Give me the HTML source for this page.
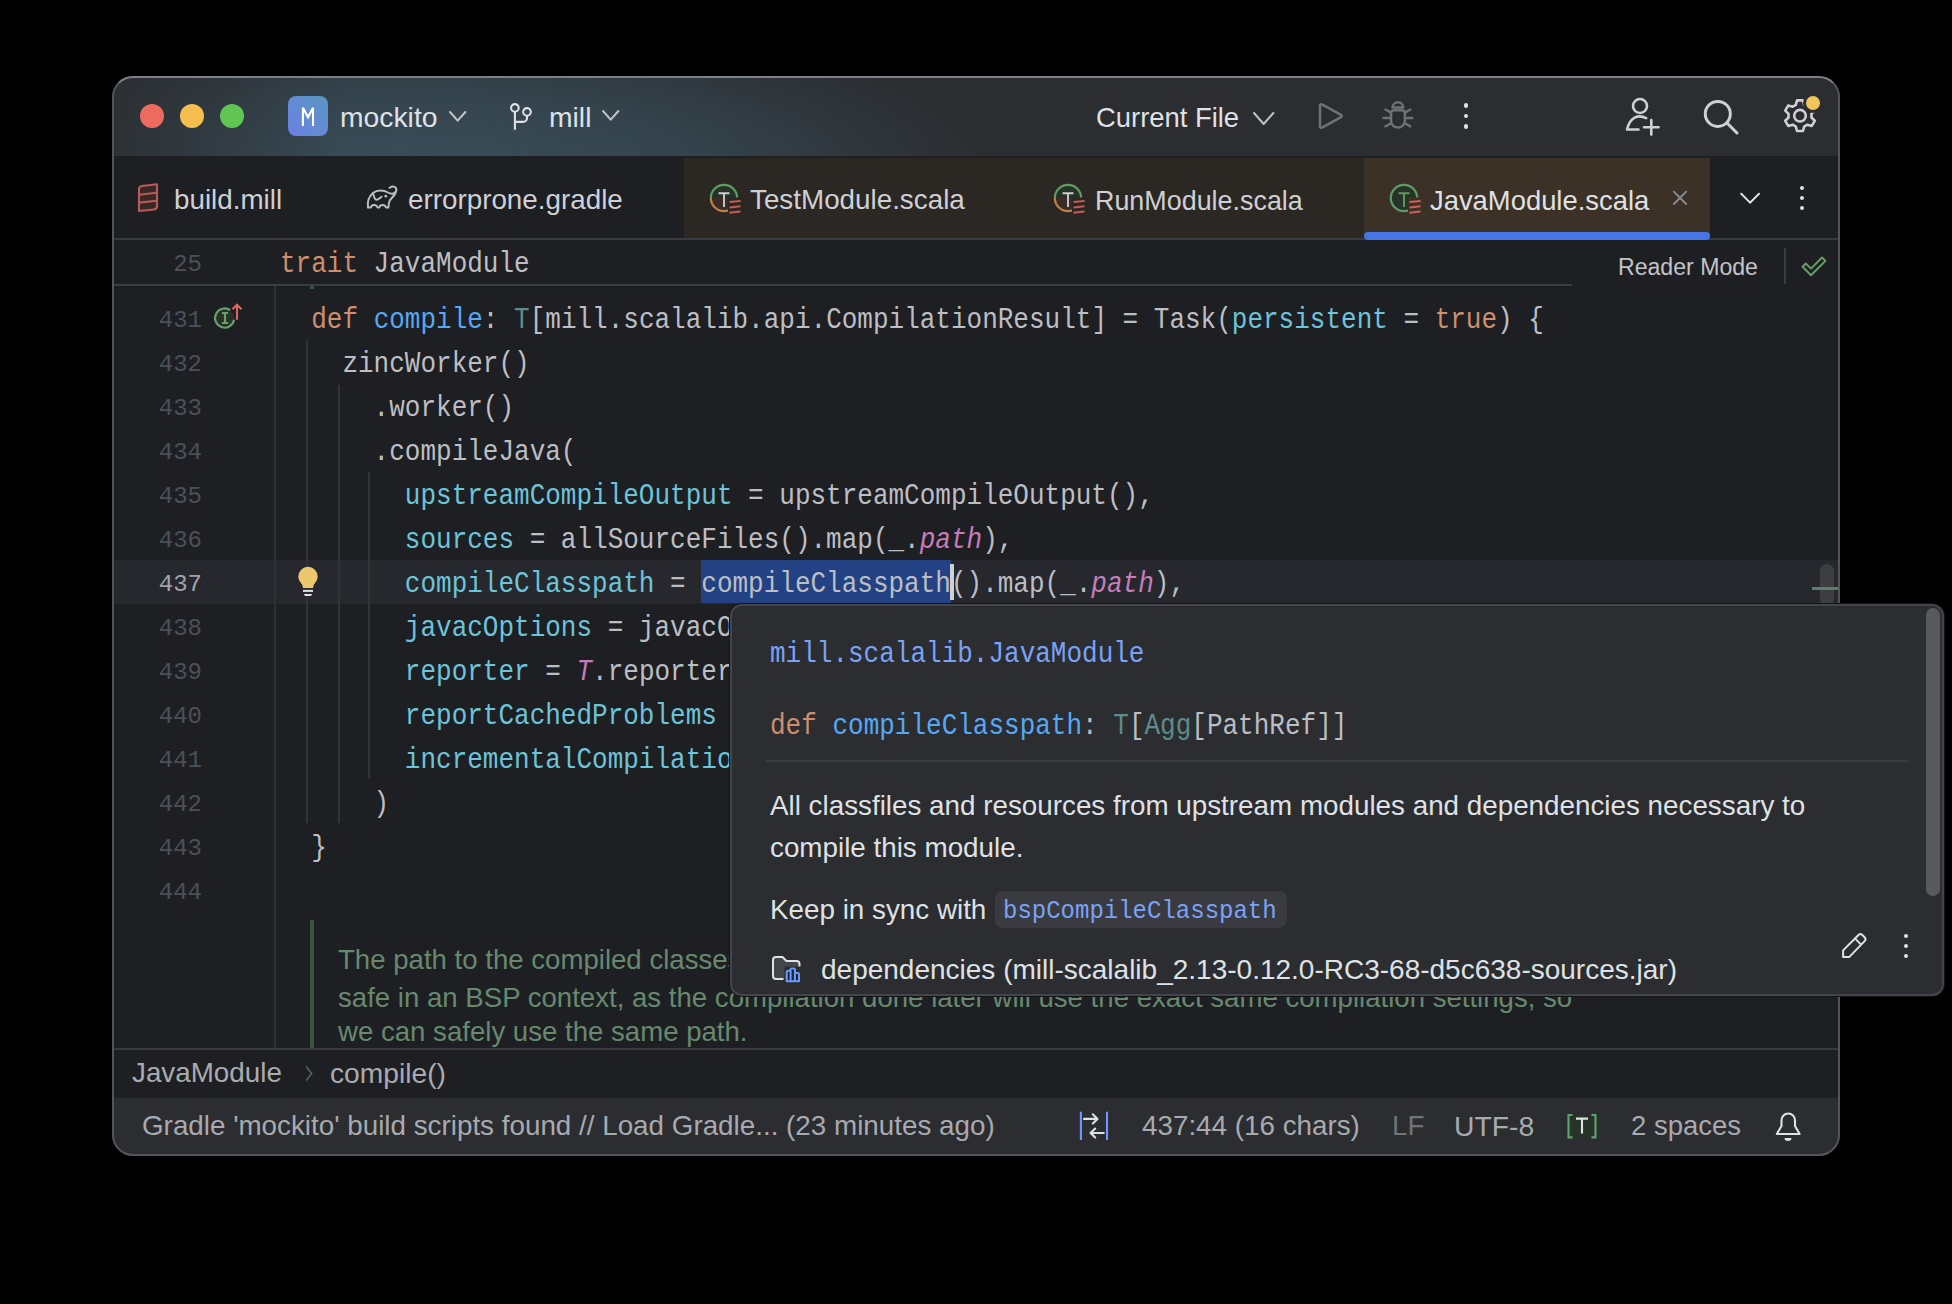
<!DOCTYPE html>
<html><head><meta charset="utf-8">
<style>
*{margin:0;padding:0;box-sizing:border-box}
html,body{width:1952px;height:1304px;background:#000;overflow:hidden}
body{position:relative;font-family:"Liberation Sans",sans-serif;color:#DFE1E5;-webkit-font-smoothing:antialiased}
.a{position:absolute}
#clip{position:absolute;left:0;top:0;width:1952px;height:1304px;clip-path:inset(76px 112px 148px 112px round 21px)}
#winb{position:absolute;left:112px;top:76px;width:1728px;height:1080px;border-radius:21px;border:2px solid #535457;border-top-color:#7E7F82;pointer-events:none}
.ui{position:absolute;font-family:"Liberation Sans",sans-serif;font-size:27.6px;white-space:pre;line-height:40px;height:40px}
.code{position:absolute;left:280px;font-family:"Liberation Mono",monospace;font-size:26px;line-height:44px;height:44px;white-space:pre;color:#BCBEC4;transform:scaleY(1.1);transform-origin:0 29px}
.ln{position:absolute;width:120px;left:82px;text-align:right;font-family:"Liberation Mono",monospace;font-size:24px;line-height:44px;height:44px;color:#4B5059}
.kw{color:#CF8E6D}.fn{color:#56A8F5}.pr{color:#6CC4DA}.it{color:#C77DBB;font-style:italic}.ty{color:#5F8C8A}
.sel{}
.pm{font-family:"Liberation Mono",monospace;font-size:26px}
svg{position:absolute;overflow:visible}
</style></head><body>
<div id="clip">

<div class="a" style="left:112px;top:76px;width:1728px;height:80px;background:linear-gradient(90deg,rgba(43,45,48,.8) 0px,rgba(43,45,48,0) 230px),radial-gradient(ellipse 600px 170px at 290px 100px,#3A4E5A 0%,#35454F 45%,#2B2D30 100%)"></div>
<div class="a" style="left:112px;top:156px;width:1728px;height:2px;background:#1E1F22"></div>
<div class="a" style="left:112px;top:158px;width:1728px;height:80px;background:#1E1F22"></div>
<div class="a" style="left:684px;top:158px;width:680px;height:80px;background:#2B2722"></div>
<div class="a" style="left:1364px;top:158px;width:346px;height:80px;background:#3C3126"></div>
<div class="a" style="left:112px;top:238px;width:1728px;height:2px;background:#393B40"></div>
<div class="a" style="left:1364px;top:232px;width:346px;height:8px;border-radius:4px;background:#4675E5"></div>
<div class="a" style="left:112px;top:240px;width:1728px;height:808px;background:#1E1F22"></div>
<div class="a" style="left:112px;top:284px;width:1460px;height:2px;background:#3B3D42"></div>
<div class="a" style="left:112px;top:286px;width:1460px;height:2px;background:#1B1C1F"></div>
<div class="a" style="left:310px;top:286px;width:4px;height:2.5px;background:#3D5444"></div>
<div class="a" style="left:112px;top:560px;width:1728px;height:44px;background:#26282E"></div>
<div class="a" style="left:701px;top:560px;width:250px;height:43px;background:#234283"></div>
<div class="a" style="left:274px;top:286px;width:2px;height:762px;background:#2F3034"></div>
<div class="a" style="left:306px;top:340px;width:2px;height:483px;background:#313337"></div>
<div class="a" style="left:338px;top:385px;width:2px;height:438px;background:#313337"></div>
<div class="a" style="left:368px;top:472px;width:2px;height:307px;background:#313337"></div>
<div class="a" style="left:112px;top:1048px;width:1728px;height:2px;background:#393B40"></div>
<div class="a" style="left:112px;top:1050px;width:1728px;height:48px;background:#1E1F22"></div>
<div class="a" style="left:112px;top:1098px;width:1728px;height:58px;background:#2B2D30"></div>
<div class="a" style="left:140px;top:104px;width:24px;height:24px;border-radius:50%;background:#EC6A5E"></div>
<div class="a" style="left:180px;top:104px;width:24px;height:24px;border-radius:50%;background:#F4BF4F"></div>
<div class="a" style="left:220px;top:104px;width:24px;height:24px;border-radius:50%;background:#61C554"></div>
<div class="a" style="left:288px;top:96px;width:40px;height:40px;border-radius:8px;background:linear-gradient(45deg,#6B7FE3,#5A97C2)"></div>
<svg style="left:288px;top:96px" width="40" height="40"><path d="M14.9 30 V11.8 L20 21.2 L25 11.8 V30" fill="none" stroke="#FFFFFF" stroke-width="2.1" stroke-linejoin="miter"/></svg>
<div class="ui" style="left:340px;top:97.19px;color:#DFE1E5;font-size:28.3px;">mockito</div>
<svg style="left:449.3px;top:110.5px" width="17.4" height="10.7"><path d="M1 1 L8.7 9.7 L16.4 1" fill="none" stroke="#C0C2C7" stroke-width="2" stroke-linecap="round" stroke-linejoin="round"/></svg>
<svg style="left:500px;top:94px" width="40" height="44"><circle cx="14.9" cy="13.9" r="3.8" fill="none" stroke="#DFE1E5" stroke-width="2.1"/><circle cx="27" cy="17.9" r="3.8" fill="none" stroke="#DFE1E5" stroke-width="2.1"/><path d="M14.9 17.7 V35.8 M14.9 27.9 H23 A4 4 0 0 0 27 23.9 V21.7" fill="none" stroke="#DFE1E5" stroke-width="2.1"/></svg>
<div class="ui" style="left:549px;top:97.19px;color:#DFE1E5;font-size:28.3px;">mill</div>
<svg style="left:601.6px;top:109.7px" width="17.4" height="10.7"><path d="M1 1 L8.7 9.7 L16.4 1" fill="none" stroke="#C0C2C7" stroke-width="2" stroke-linecap="round" stroke-linejoin="round"/></svg>
<div class="ui" style="left:1096px;top:97.51px;color:#DFE1E5;font-size:27.4px;">Current File</div>
<svg style="left:1253.3px;top:111.7px" width="21.4" height="13"><path d="M1 1 L10.7 12 L20.4 1" fill="none" stroke="#C0C2C7" stroke-width="2" stroke-linecap="round" stroke-linejoin="round"/></svg>
<svg style="left:1316px;top:100px" width="30" height="32"><path d="M4 6 Q4 3.3 6.4 4.6 L24.6 14.6 Q26.8 16 24.6 17.4 L6.4 27.4 Q4 28.7 4 26 Z" fill="none" stroke="#6F7074" stroke-width="2.6" stroke-linejoin="round"/></svg>
<svg style="left:1376px;top:94px" width="44" height="42"><path d="M16.6 13.6 A5.3 5.3 0 0 1 27.2 13.6 Z" fill="none" stroke="#6F7074" stroke-width="2.5" stroke-linejoin="round"/><path d="M15 19.5 Q15 16.3 18.5 16.3 H25.4 Q28.9 16.3 28.9 19.5 V26.6 A6.95 7 0 0 1 15 26.6 Z" fill="none" stroke="#6F7074" stroke-width="2.5"/><path d="M9.5 15.5 L14.5 18.3 M34.3 15.5 L29.3 18.3 M7.5 24 H13.5 M36.3 24 H30.3 M9.5 32.3 L14.5 29.5 M34.3 32.3 L29.3 29.5" stroke="#6F7074" stroke-width="2.5" stroke-linecap="round"/></svg>
<div class="a" style="left:1463.6px;top:103.0px;width:4.8px;height:4.8px;border-radius:50%;background:#DFE1E5"></div>
<div class="a" style="left:1463.6px;top:113.6px;width:4.8px;height:4.8px;border-radius:50%;background:#DFE1E5"></div>
<div class="a" style="left:1463.6px;top:124.19999999999999px;width:4.8px;height:4.8px;border-radius:50%;background:#DFE1E5"></div>
<svg style="left:1610px;top:86px" width="60" height="56"><circle cx="30" cy="20" r="7" fill="none" stroke="#CED0D6" stroke-width="2.6"/><path d="M36.2 32.2 C 28 28 20 31 17 43.5 H 28.5" fill="none" stroke="#CED0D6" stroke-width="2.6" stroke-linecap="round" stroke-linejoin="round"/><path d="M34 41.3 H 48.6 M 41.3 34 V 48.6" stroke="#CED0D6" stroke-width="2.6" stroke-linecap="round"/></svg>
<svg style="left:1700px;top:96px" width="42" height="42"><circle cx="17.8" cy="17.9" r="12.5" fill="none" stroke="#CED0D6" stroke-width="3"/><path d="M27 27 L 37 37" stroke="#CED0D6" stroke-width="3" stroke-linecap="round"/></svg>
<svg style="left:1782px;top:98px" width="36" height="36"><path d="M13.84 6.87 L15.02 2.39 L20.98 2.39 L22.16 6.87 L25.30 8.69 L29.77 7.47 L32.75 12.62 L29.46 15.89 L29.46 19.51 L32.75 22.78 L29.77 27.93 L25.30 26.71 L22.16 28.53 L20.98 33.01 L15.02 33.01 L13.84 28.53 L10.70 26.71 L6.23 27.93 L3.25 22.78 L6.54 19.51 L6.54 15.89 L3.25 12.62 L6.23 7.47 L10.70 8.69Z" fill="none" stroke="#CED0D6" stroke-width="2.6" stroke-linejoin="round"/><circle cx="18" cy="17.7" r="5.8" fill="none" stroke="#CED0D6" stroke-width="2.6"/></svg>
<div class="a" style="left:1806px;top:96px;width:14px;height:14px;border-radius:50%;background:#F2C55C;box-shadow:0 0 0 3px #2B2D30"></div>
<svg style="left:130px;top:178px" width="36" height="40"><path d="M9 33 V11 Q9 8.3 12 8 L27 6.3 V28.5 Q27 31.2 24 31.5 Z" fill="#382828" stroke="#B85A56" stroke-width="2.1" stroke-linejoin="round"/><path d="M9 16.7 L27 14.8 M9 24.6 L27 22.7" stroke="#B85A56" stroke-width="2.1"/></svg>
<div class="ui" style="left:174px;top:180.37px;color:#CED0D6;font-size:27.8px;">build.mill</div>
<svg style="left:360px;top:178px" width="44" height="38"><path d="M8 29.6 C 7 23 9 18.5 13 15 C 17 11.5 24 12 28 14.5 C 31.5 16.5 35.5 16 36.3 12.3 C 36.8 9 33.5 7.2 29.5 9.8 M 36.2 13 C 35.6 17.5 31.5 19.5 29.8 22.5 C 28.6 24.8 28.5 27 28.4 29.6 H 26 C 25.2 26.2 20.2 26 19.2 29.6 H 17.6 C 16.8 26.2 11.6 26 10.8 29.6 H 8" fill="none" stroke="#B9BBC0" stroke-width="2" stroke-linejoin="round" stroke-linecap="round"/><path d="M13 15 C 14 19 14.4 21.6 16.2 21.8 C 18 22 19.8 20.2 21.6 18.8" fill="none" stroke="#B9BBC0" stroke-width="2" stroke-linecap="round"/><circle cx="25.8" cy="18.2" r="1.4" fill="#B9BBC0"/></svg>
<div class="ui" style="left:408px;top:180.37px;color:#CED0D6;font-size:27.8px;">errorprone.gradle</div>
<svg style="left:708px;top:182px" width="36" height="36"><path d="M2.8 16 A13.2 13.2 0 0 1 29.2 16 Z" fill="#283328"/><path d="M2.8 16 A13.2 13.2 0 0 0 29.2 16 Z" fill="#3A2C24"/><path d="M2.8 16 A13.2 13.2 0 0 1 29.2 16" fill="none" stroke="#5E9C66" stroke-width="2.2"/><path d="M2.8 16 A13.2 13.2 0 0 0 29.2 16" fill="none" stroke="#BD7E4A" stroke-width="2.2"/><path d="M10.5 11.2 H21.5 M16 11.2 V25" stroke="#C9CBD0" stroke-width="1.9"/><rect x="20" y="15.5" width="14" height="18" fill="#2B2722"/><path d="M21.5 20.1 L32.5 19 M21.5 25.4 L32.5 24.3 M21.5 30.7 L32.5 29.6" stroke="#C85A55" stroke-width="2"/></svg>
<div class="ui" style="left:750px;top:180.37px;color:#CED0D6;font-size:27.8px;">TestModule.scala</div>
<svg style="left:1052px;top:182px" width="36" height="36"><path d="M2.8 16 A13.2 13.2 0 0 1 29.2 16 Z" fill="#283328"/><path d="M2.8 16 A13.2 13.2 0 0 0 29.2 16 Z" fill="#3A2C24"/><path d="M2.8 16 A13.2 13.2 0 0 1 29.2 16" fill="none" stroke="#5E9C66" stroke-width="2.2"/><path d="M2.8 16 A13.2 13.2 0 0 0 29.2 16" fill="none" stroke="#BD7E4A" stroke-width="2.2"/><path d="M10.5 11.2 H21.5 M16 11.2 V25" stroke="#C9CBD0" stroke-width="1.9"/><rect x="20" y="15.5" width="14" height="18" fill="#2B2722"/><path d="M21.5 20.1 L32.5 19 M21.5 25.4 L32.5 24.3 M21.5 30.7 L32.5 29.6" stroke="#C85A55" stroke-width="2"/></svg>
<div class="ui" style="left:1095px;top:180.68px;color:#CED0D6;font-size:26.9px;">RunModule.scala</div>
<svg style="left:1388px;top:182px" width="36" height="36"><circle cx="16" cy="16" r="13.2" fill="#283328" stroke="#5E9C66" stroke-width="2.2"/><path d="M10.5 11.2 H21.5 M16 11.2 V25" stroke="#5E9C66" stroke-width="1.9"/><rect x="20" y="15.5" width="14" height="18" fill="#3C3126"/><path d="M21.5 20.1 L32.5 19 M21.5 25.4 L32.5 24.3 M21.5 30.7 L32.5 29.6" stroke="#D0605A" stroke-width="2"/></svg>
<div class="ui" style="left:1430px;top:180.51px;color:#DFE1E5;font-size:27.4px;">JavaModule.scala</div>
<svg style="left:1660px;top:170px" width="40" height="40"><path d="M13.8 21.6 L26.2 34 M26.2 21.6 L13.8 34" stroke="#8C8E94" stroke-width="1.8" stroke-linecap="round"/></svg>
<svg style="left:1730px;top:180px" width="40" height="40"><path d="M11.2 13.8 L20.1 22.7 L29 13.8" fill="none" stroke="#DFE1E5" stroke-width="2" stroke-linecap="round"/></svg>
<div class="a" style="left:1799.8px;top:185.8px;width:4.4px;height:4.4px;border-radius:50%;background:#DFE1E5"></div>
<div class="a" style="left:1799.8px;top:195.8px;width:4.4px;height:4.4px;border-radius:50%;background:#DFE1E5"></div>
<div class="a" style="left:1799.8px;top:205.8px;width:4.4px;height:4.4px;border-radius:50%;background:#DFE1E5"></div>
<div class="code" style="top:243px"><span class="kw">trait</span> JavaModule</div>
<div class="ln" style="top:243px">25</div>
<div class="ui" style="left:1618px;top:247.40px;color:#C2C4C9;font-size:23.1px;">Reader Mode</div>
<div class="a" style="left:1784px;top:248px;width:2px;height:36px;background:#393B40"></div>
<svg style="left:1796px;top:250px" width="38" height="34"><path d="M6.6 16.8 L9.8 13.5 L15 18.6 L26 7.5 L29.4 10.9 L15 25.2 Z" fill="none" stroke="#639F68" stroke-width="2" stroke-linejoin="round"/></svg>
<div class="ln" style="top:299px;">431</div>
<div class="code" style="top:299px">  <span class="kw">def</span> <span class="fn">compile</span>: <span class="ty">T</span>[mill.scalalib.api.CompilationResult] = Task(<span class="pr">persistent</span> = <span class="kw">true</span>) {</div>
<div class="ln" style="top:343px;">432</div>
<div class="code" style="top:343px">    zincWorker()</div>
<div class="ln" style="top:387px;">433</div>
<div class="code" style="top:387px">      .worker()</div>
<div class="ln" style="top:431px;">434</div>
<div class="code" style="top:431px">      .compileJava(</div>
<div class="ln" style="top:475px;">435</div>
<div class="code" style="top:475px">        <span class="pr">upstreamCompileOutput</span> = upstreamCompileOutput(),</div>
<div class="ln" style="top:519px;">436</div>
<div class="code" style="top:519px">        <span class="pr">sources</span> = allSourceFiles().map(_.<span class="it">path</span>),</div>
<div class="ln" style="top:563px;color:#A1A3AB">437</div>
<div class="code" style="top:563px">        <span class="pr">compileClasspath</span> = <span class="sel">compileClasspath</span>().map(_.<span class="it">path</span>),</div>
<div class="ln" style="top:607px;">438</div>
<div class="code" style="top:607px">        <span class="pr">javacOptions</span> = javacOptions(),</div>
<div class="ln" style="top:651px;">439</div>
<div class="code" style="top:651px">        <span class="pr">reporter</span> = <span class="it">T</span>.reporter.apply(hashCode),</div>
<div class="ln" style="top:695px;">440</div>
<div class="code" style="top:695px">        <span class="pr">reportCachedProblems</span> = zincReportCachedProblems(),</div>
<div class="ln" style="top:739px;">441</div>
<div class="code" style="top:739px">        <span class="pr">incrementalCompilation</span> = zincIncrementalCompilation()</div>
<div class="ln" style="top:783px;">442</div>
<div class="code" style="top:783px">      )</div>
<div class="ln" style="top:827px;">443</div>
<div class="code" style="top:827px">  }</div>
<div class="ln" style="top:871px;">444</div>
<div class="code" style="top:871px"></div>
<svg style="left:208px;top:298px" width="44" height="38"><circle cx="16.6" cy="20" r="9.6" fill="#283328"/><path d="M22.2 12.2 A9.6 9.6 0 1 0 26.1 21.8" fill="none" stroke="#6AA06E" stroke-width="2.1"/><path d="M14 15 H20.1 M17 15 V25 M14 25 H20.1" stroke="#6AA06E" stroke-width="2.1"/><path d="M29 21.8 V7 M24.5 11.2 L29 6.7 L33.5 11.2" fill="none" stroke="#DD6763" stroke-width="2.1"/></svg>
<svg style="left:290px;top:560px" width="36" height="44"><circle cx="18" cy="16.5" r="9.7" fill="#EBC76D"/><path d="M11.5 22 L13 28 H23 L24.5 22 Z" fill="#EBC76D"/><path d="M13 30.9 H23" stroke="#DFE1E5" stroke-width="2"/><path d="M13.8 33.9 H22.2 L21 35.9 H15 Z" fill="#DFE1E5"/></svg>
<div class="a" style="left:950px;top:564px;width:4px;height:36px;background:#CED0D6"></div>
<div class="a" style="left:1820px;top:564px;width:14px;height:42px;border-radius:7px;background:#3C3E42"></div>
<div class="a" style="left:1812px;top:587px;width:28px;height:3px;background:#5F7E6A"></div>
<div class="a" style="left:310px;top:920px;width:4px;height:128px;background:#3D5444"></div>
<div class="ui" style="left:338px;top:940.44px;color:#66896F;font-size:27.6px;">The path to the compiled classes without forcing the compilation. This is</div>
<div class="ui" style="left:338px;top:978.44px;color:#66896F;font-size:27.6px;">safe in an BSP context, as the compilation done later will use the exact same compilation settings, so</div>
<div class="ui" style="left:338px;top:1012.44px;color:#66896F;font-size:27.6px;">we can safely use the same path.</div>
<div class="ui" style="left:132px;top:1053.37px;color:#A9ABB0;font-size:27.8px;">JavaModule</div>
<svg style="left:303px;top:1064px" width="12" height="20"><path d="M3.2 2.5 L8.6 9.5 L3.2 16.5" fill="none" stroke="#595C62" stroke-width="1.7"/></svg>
<div class="ui" style="left:330px;top:1053.23px;color:#A9ABB0;font-size:28.2px;">compile()</div>
<div class="ui" style="left:142px;top:1106.37px;color:#A8AAAF;font-size:27.8px;">Gradle 'mockito' build scripts found // Load Gradle... (23 minutes ago)</div>
<svg style="left:1072px;top:1106px" width="44" height="40"><path d="M8.9 5.8 V33.9 M35 5.8 V33.9" stroke="#6B9BFA" stroke-width="2.1"/><path d="M12 12.9 H25 M20.8 8.3 L25.5 12.9 L20.8 17.5 M31.8 27 H18.8 M23.2 22.5 L18.5 27 L23.2 31.5" fill="none" stroke="#DFE1E5" stroke-width="2.1" stroke-linecap="round" stroke-linejoin="round"/></svg>
<div class="ui" style="left:1142px;top:1106.37px;color:#A8AAAF;font-size:27.8px;">437:44 (16 chars)</div>
<div class="ui" style="left:1392px;top:1106.37px;color:#6F737A;font-size:27.8px;">LF</div>
<div class="ui" style="left:1454px;top:1106.19px;color:#A8AAAF;font-size:28.3px;">UTF-8</div>
<svg style="left:1560px;top:1106px" width="44" height="40"><rect x="8.5" y="9" width="27" height="22.4" fill="#283328"/><path d="M12.5 9 H8.5 V31.4 H12.5 M31.5 9 H35.5 V31.4 H31.5" fill="none" stroke="#5FA36A" stroke-width="2.1"/><path d="M16 12.6 H28 M22 12.6 V27.5" stroke="#DFE1E5" stroke-width="2.1"/></svg>
<div class="ui" style="left:1631px;top:1106.47px;color:#A8AAAF;font-size:27.5px;">2 spaces</div>
<svg style="left:1770px;top:1100px" width="40" height="46"><path d="M11.5 26 V20.2 A6.75 6.75 0 0 1 25 20.2 V26 L29.6 34 H6.8 Z" fill="none" stroke="#DFE1E5" stroke-width="2.1" stroke-linejoin="round"/><path d="M14.5 38 H21.5 A3.5 3 0 0 1 14.5 38 Z" fill="#DFE1E5"/></svg>
</div>
<div id="winb"></div>
<div class="a" style="left:730px;top:604px;width:1214px;height:392px;border-radius:12px;background:#2B2D30;border:2px solid #43454A;box-shadow:0 0 0 1px #151618"></div>
<div class="code" style="left:770px;top:633px;color:#7AA2F7">mill.scalalib.JavaModule</div>
<div class="code" style="left:770px;top:705px"><span class="kw">def</span> <span class="fn">compileClasspath</span>: <span class="ty">T</span>[<span class="ty">Agg</span>[PathRef]]</div>
<div class="a" style="left:766px;top:760px;width:1142px;height:2px;background:#393B40"></div>
<div class="ui" style="left:770px;top:786.37px;color:#DFE1E5;font-size:27.8px;">All classfiles and resources from upstream modules and dependencies necessary to</div>
<div class="ui" style="left:770px;top:828.37px;color:#DFE1E5;font-size:27.8px;">compile this module.</div>
<div class="ui" style="left:770px;top:890.37px;color:#DFE1E5;font-size:27.8px;">Keep in sync with</div>
<div class="a" style="left:995px;top:891px;width:292px;height:37px;border-radius:8px;background:#393B40"></div>
<div class="code" style="left:1003px;top:890px;color:#7AA2F7;font-size:24px;transform-origin:0 28px">bspCompileClasspath</div>
<svg style="left:764px;top:948px" width="44" height="42"><path d="M19.5 31 H12 Q9 31 9 28 V12 Q9 9 12 9 H18.5 L22.5 13 H32.5 Q35.5 13 35.5 16 V21.5" fill="#45464B" stroke="#DFE1E5" stroke-width="2" stroke-linejoin="round"/><path d="M19.5 31 L35.5 31 V21.5 Z" fill="#45464B"/><rect x="20.5" y="18.5" width="17" height="17" fill="#2B2D30"/><path d="M22.7 33.2 V24 Q22.7 22.8 24 22.8 H26.5 V21.8 Q26.5 20.5 27.8 20.5 H29.7 Q31 20.5 31 21.8 V25 H33.8 Q35 25 35 26.3 V33.2 Z" fill="#1F2535" stroke="#6B9BFA" stroke-width="2" stroke-linejoin="round"/><path d="M26.6 33 V23 M30.9 33 V25.5" stroke="#6B9BFA" stroke-width="2"/></svg>
<div class="ui" style="left:821px;top:950.30px;color:#DFE1E5;font-size:28.0px;">dependencies (mill-scalalib_2.13-0.12.0-RC3-68-d5c638-sources.jar)</div>
<svg style="left:1830px;top:920px" width="44" height="44"><path d="M13.1 36.9 V30.4 L28.5 15 Q30.4 13.1 32.3 15 L34.6 17.3 Q36.5 19.2 34.6 21.1 L19.4 36.9 Z M25 18.4 L31.3 24.9" fill="none" stroke="#DFE1E5" stroke-width="2" stroke-linejoin="round"/></svg>
<div class="a" style="left:1903.8px;top:933.6999999999999px;width:4.4px;height:4.4px;border-radius:50%;background:#DFE1E5"></div>
<div class="a" style="left:1903.8px;top:943.8px;width:4.4px;height:4.4px;border-radius:50%;background:#DFE1E5"></div>
<div class="a" style="left:1903.8px;top:953.8px;width:4.4px;height:4.4px;border-radius:50%;background:#DFE1E5"></div>
<div class="a" style="left:1926px;top:608px;width:14px;height:288px;border-radius:7px;background:#58595C"></div>
</body></html>
